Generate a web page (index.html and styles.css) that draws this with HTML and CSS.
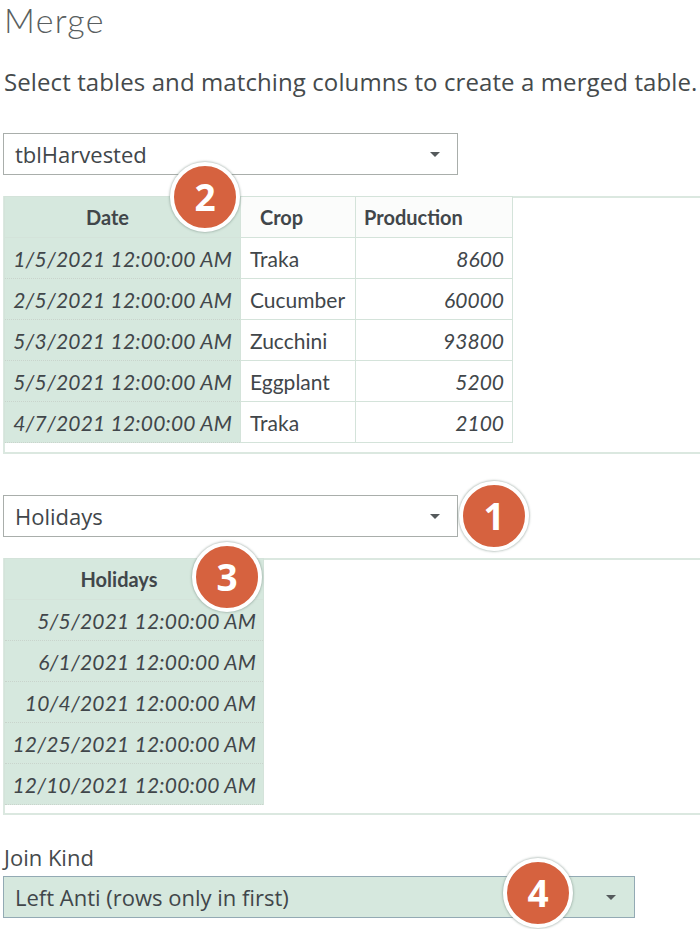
FILE: index.html
```html
<!DOCTYPE html>
<html>
<head>
<meta charset="utf-8">
<link rel="stylesheet" href="styles.css">
</head>
<body>
<div class="page">
  <h1 class="title">Merge</h1>
  <p class="subtitle">Select tables and matching columns to create a merged table.</p>

  <div class="select select-table">
    <span class="select-text">tblHarvested</span>
    <span class="caret"></span>
  </div>

  <div class="panel panel-one">
    <table class="grid grid-one">
      <thead>
        <tr>
          <th class="col-key center">Date</th>
          <th class="col-crop">Crop</th>
          <th class="col-prod">Production</th>
        </tr>
      </thead>
      <tbody>
        <tr><td class="col-key date">1/5/2021 12:00:00 AM</td><td class="col-crop">Traka</td><td class="col-prod num">8600</td></tr>
        <tr><td class="col-key date">2/5/2021 12:00:00 AM</td><td class="col-crop">Cucumber</td><td class="col-prod num">60000</td></tr>
        <tr><td class="col-key date">5/3/2021 12:00:00 AM</td><td class="col-crop">Zucchini</td><td class="col-prod num">93800</td></tr>
        <tr><td class="col-key date">5/5/2021 12:00:00 AM</td><td class="col-crop">Eggplant</td><td class="col-prod num">5200</td></tr>
        <tr><td class="col-key date">4/7/2021 12:00:00 AM</td><td class="col-crop">Traka</td><td class="col-prod num">2100</td></tr>
      </tbody>
    </table>
  </div>

  <div class="select select-table select-second">
    <span class="select-text">Holidays</span>
    <span class="caret"></span>
  </div>

  <div class="panel panel-two">
    <table class="grid grid-two">
      <thead>
        <tr><th class="col-hol center">Holidays</th></tr>
      </thead>
      <tbody>
        <tr><td class="col-hol date">5/5/2021 12:00:00 AM</td></tr>
        <tr><td class="col-hol date">6/1/2021 12:00:00 AM</td></tr>
        <tr><td class="col-hol date">10/4/2021 12:00:00 AM</td></tr>
        <tr><td class="col-hol date">12/25/2021 12:00:00 AM</td></tr>
        <tr><td class="col-hol date">12/10/2021 12:00:00 AM</td></tr>
      </tbody>
    </table>
  </div>

  <div class="label">Join Kind</div>
  <div class="select select-join">
    <span class="select-text">Left Anti (rows only in first)</span>
    <span class="caret"></span>
  </div>

  <span class="badge badge-1">1</span>
  <span class="badge badge-2">2</span>
  <span class="badge badge-3">3</span>
  <span class="badge badge-4">4</span>
</div>
</body>
</html>
```

FILE: styles.css
```css
html, body {
  margin: 0;
  padding: 0;
  background: #ffffff;
}

.page {
  position: relative;
  width: 700px;
  height: 929px;
  overflow: hidden;
  font-family: "Open Sans", "Noto Sans", sans-serif;
  color: #454a4c;
}

.title {
  margin: 0;
  padding: 0 0 0 4px;
  font-family: Lato, "Open Sans", sans-serif;
  font-size: 34px;
  font-weight: 300;
  line-height: 40px;
  height: 42px;
  color: #595e60;
  letter-spacing: 1.3px;
}

.subtitle {
  margin: 24px 0 0 0;
  padding-left: 4px;
  font-size: 24px;
  line-height: 32px;
  letter-spacing: 0.1px;
  color: #454a4c;
  white-space: nowrap;
}

.select {
  box-sizing: border-box;
  display: flex;
  align-items: center;
  justify-content: space-between;
  margin-left: 3px;
  height: 42px;
  border: 1px solid #a9aeab;
  background: #ffffff;
  padding: 0 17px 0 11px;
}

.select-table {
  width: 455px;
  margin-top: 35px;
}

.select-second {
  margin-top: 41px;
}

.select-text {
  font-size: 22px;
  color: #41464a;
}

.caret {
  width: 0;
  height: 0;
  border-left: 5px solid transparent;
  border-right: 5px solid transparent;
  border-top: 5px solid #555a5c;
  margin-top: 1px;
}

.panel {
  box-sizing: border-box;
  margin-top: 21px;
  margin-left: 3px;
  border-top: 2px solid #dbe8e0;
  border-left: 2px solid #dbe8e0;
  border-bottom: 2px solid #dbe8e0;
}

.panel-one {
  height: 258px;
}

.panel-two {
  height: 257px;
}

.grid {
  border-collapse: collapse;
  margin-top: -2px;
  margin-left: -1px;
  font-family: Lato, "Open Sans", sans-serif;
  font-size: 21px;
  color: #41464a;
}

.grid th,
.grid td {
  box-sizing: border-box;
  height: 41px;
  padding: 0 8px;
  border: 1.5px solid #d4e3da;
  white-space: nowrap;
}

.grid th {
  font-weight: 700;
  font-size: 20px;
  text-align: left;
  background: #fbfcfb;
}

.grid .col-key,
.grid .col-hol {
  background: #d6e8de;
}

.grid td.col-key,
.grid td.col-hol {
  border-top: 1px dotted #c9d4cc;
  border-bottom: 1px dotted #c9d4cc;
}

.grid th.center {
  text-align: center;
  padding-right: 38px;
}

.col-key {
  width: 236px;
}

.col-crop {
  width: 115px;
}

.col-prod {
  width: 157px;
}

.col-hol {
  width: 259px;
}

.grid td.col-hol {
  padding: 0 7px 0 2px;
}

.grid th.col-crop {
  padding-left: 19px;
}

.grid td.col-crop {
  padding-left: 9px;
}

.date {
  font-style: italic;
  text-align: right;
  letter-spacing: 0.2px;
}

.num {
  font-style: italic;
  text-align: right;
}

.label {
  margin: 28px 0 0 4px;
  font-size: 22px;
  line-height: 28px;
  color: #454a4c;
}

.select-join {
  width: 632px;
  margin-top: 5px;
  background: #d6e8de;
  border-color: #93aab4;
  padding-right: 18px;
}

.badge {
  position: absolute;
  box-sizing: border-box;
  width: 70px;
  height: 70px;
  border-radius: 50%;
  background: #d6623f;
  border: 4px solid #ffffff;
  box-shadow: 0 0 2px 1px rgba(120, 140, 130, 0.45);
  color: #ffffff;
  font-family: "Open Sans", "Noto Sans", sans-serif;
  font-weight: 700;
  font-size: 37px;
  line-height: 62px;
  text-align: center;
}

.badge-1 { left: 459px; top: 481px; }
.badge-2 { left: 170px; top: 162px; }
.badge-3 { left: 192px; top: 542px; }
.badge-4 { left: 503px; top: 858px; }
```
